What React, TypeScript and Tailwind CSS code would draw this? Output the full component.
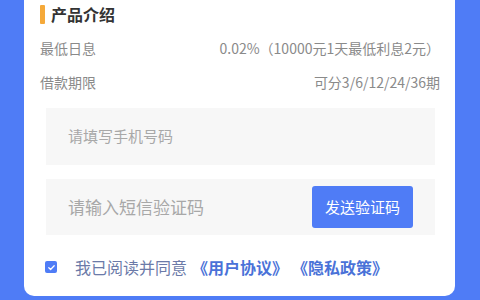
export default function App() {
  return (
    <div
      className="h-[300px] w-[480px] bg-[#4f7cf6] pl-[24px] pr-[25px]"
      style={{ fontFamily: '"Noto Sans CJK SC", "Noto Sans", sans-serif' }}
    >
      <div className="h-[296px] rounded-b-[10px] bg-white">
        {/* section title */}
        <div className="flex h-[27px] items-center pl-[16px] pt-[1px]">
          <span className="h-[19px] w-[5px] rounded-[1px] bg-[#f5a93a]" />
          <span className="ml-[6px] text-[16px] font-bold leading-none text-[#333]">产品介绍</span>
        </div>

        <div className="pl-[16px] pr-[15px] text-[14px] text-[#8a8a8a]">
          <div className="flex h-[35px] items-center justify-between pt-[8px]">
            <span>最低日息</span>
            <span>0.02%（10000元1天最低利息2元）</span>
          </div>
          <div className="flex h-[35px] items-center justify-between pt-[6px]">
            <span>借款期限</span>
            <span>可分3/6/12/24/36期</span>
          </div>
        </div>

        <div className="ml-[22px] mr-[20px] mt-[11px] flex flex-col gap-[14px]">
          <div className="flex h-[57px] items-center bg-[#f7f7f7] pl-[22px] text-[15px] text-[#a8a8a8]">
            请填写手机号码
          </div>
          <div className="flex h-[56px] items-center justify-between bg-[#f7f7f7] pl-[22px] pr-[22px]">
            <span className="text-[17px] text-[#a8a8a8]">请输入短信验证码</span>
            <button className="flex h-[42px] w-[101px] items-center justify-center rounded-[3px] bg-[#4f7cf6] text-[15px] text-white">
              发送验证码
            </button>
          </div>
        </div>

        <div className="mt-[24px] flex items-center pl-[21px] text-[16px] leading-none">
          <span className="flex h-[12px] w-[12px] items-center justify-center rounded-[2px] bg-[#4f7cf6]">
            <svg width="9" height="9" viewBox="0 0 10 10" fill="none">
              <path d="M2 5.2l2 2 4-4.2" stroke="white" strokeWidth="1.4" strokeLinecap="round" strokeLinejoin="round" />
            </svg>
          </span>
          <span className="ml-[18px] text-[#6b7aa8]">我已阅读并同意</span>
          <span className="ml-[5px] font-semibold text-[#4a72d8]">《用户协议》</span>
          <span className="ml-[4px] font-semibold text-[#4a72d8]">《隐私政策》</span>
        </div>
      </div>
    </div>
  );
}
